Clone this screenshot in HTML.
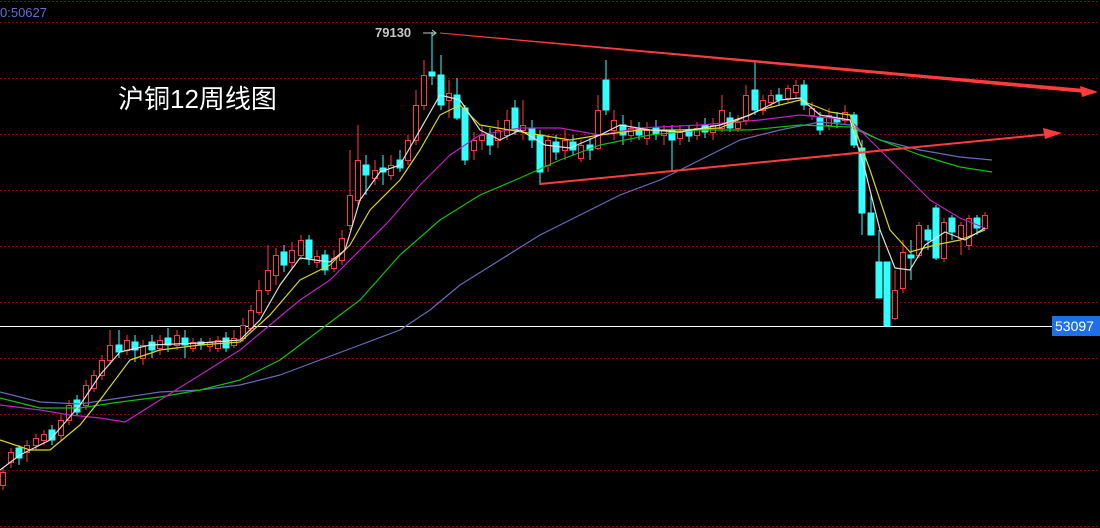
<!DOCTYPE html>
<html><head><meta charset="utf-8"><style>
html,body{margin:0;padding:0;background:#000;width:1100px;height:528px;overflow:hidden}
svg{display:block}
</style></head><body>
<svg width="1100" height="528" viewBox="0 0 1100 528" xmlns="http://www.w3.org/2000/svg">
<rect width="1100" height="528" fill="#000"/>
<g stroke="#7a0a0a" stroke-width="1" stroke-dasharray="2,2">
<line x1="0" y1="1.5" x2="1100" y2="1.5"/>
<line x1="0" y1="22.5" x2="1100" y2="22.5"/>
<line x1="0" y1="78.5" x2="1100" y2="78.5"/>
<line x1="0" y1="134.5" x2="1100" y2="134.5"/>
<line x1="0" y1="190.5" x2="1100" y2="190.5"/>
<line x1="0" y1="246.5" x2="1100" y2="246.5"/>
<line x1="0" y1="302.5" x2="1100" y2="302.5"/>
<line x1="0" y1="358.5" x2="1100" y2="358.5"/>
<line x1="0" y1="414.5" x2="1100" y2="414.5"/>
<line x1="0" y1="470.5" x2="1100" y2="470.5"/>
<line x1="0" y1="526.5" x2="1100" y2="526.5"/>
</g>
<line x1="0" y1="326.5" x2="1052" y2="326.5" stroke="#fff" stroke-width="1"/>

<g stroke="#ff3c3c" stroke-width="1" fill="#000">
<path d="M3 468V490M11 448V468M27 440V462M36 434V450M44 430V445M61 415V440M69 400V425M86 380V410M94 370V392M102 355V380M110 330V365M127 335V355M143 340V365M160 335V355M177 330V350M193 338V352M210 338V352M218 336V352M234 330V348M243 318V342M251 305V332M259 280V315M268 245V295M276 248V285M292 242V268M301 235V260M317 250V268M334 250V272M342 230V265M350 150V230M358 125V205M375 160V185M391 155V180M408 135V165M416 90V145M424 60V110M449 80V118M474 132V160M482 125V150M498 120V148M507 110V140M523 100V140M548 135V172M565 130V160M581 140V162M598 95V150M614 110V140M631 120V142M647 122V145M664 125V145M680 125V145M697 122V140M713 118V140M722 95V132M738 115V132M746 85V125M763 95V115M771 90V108M788 85V102M796 80V98M812 102V120M829 108V130M845 105V125M895 270V320M903 240V293M919 222V258M944 218V262M961 222V255M969 215V250M985 212V230"/>
<rect x="0.5" y="472.5" width="5" height="13"/><rect x="8.5" y="452.5" width="5" height="10"/><rect x="24.5" y="445.5" width="5" height="7"/><rect x="33.5" y="438.5" width="5" height="7"/><rect x="41.5" y="434.5" width="5" height="6"/><rect x="58.5" y="420.5" width="5" height="15"/><rect x="66.5" y="405.5" width="5" height="15"/><rect x="83.5" y="385.5" width="5" height="20"/><rect x="91.5" y="375.5" width="5" height="13"/><rect x="99.5" y="360.5" width="5" height="15"/><rect x="107.5" y="345.5" width="5" height="15"/><rect x="124.5" y="340.5" width="5" height="10"/><rect x="140.5" y="345.5" width="5" height="13"/><rect x="157.5" y="340.5" width="5" height="8"/><rect x="174.5" y="335.5" width="5" height="10"/><rect x="190.5" y="342.5" width="5" height="6"/><rect x="207.5" y="342.5" width="5" height="4"/><rect x="215.5" y="340.5" width="5" height="8"/><rect x="231.5" y="338.5" width="5" height="7"/><rect x="240.5" y="325.5" width="5" height="13"/><rect x="248.5" y="310.5" width="5" height="18"/><rect x="256.5" y="290.5" width="5" height="22"/><rect x="265.5" y="270.5" width="5" height="20"/><rect x="273.5" y="255.5" width="5" height="20"/><rect x="289.5" y="250.5" width="5" height="12"/><rect x="298.5" y="240.5" width="5" height="15"/><rect x="314.5" y="256.5" width="5" height="6"/><rect x="331.5" y="258.5" width="5" height="10"/><rect x="339.5" y="238.5" width="5" height="22"/><rect x="347.5" y="195.5" width="5" height="30"/><rect x="355.5" y="160.5" width="5" height="40"/><rect x="372.5" y="170.5" width="5" height="8"/><rect x="388.5" y="165.5" width="5" height="10"/><rect x="405.5" y="140.5" width="5" height="20"/><rect x="413.5" y="105.5" width="5" height="35"/><rect x="421.5" y="75.5" width="5" height="30"/><rect x="446.5" y="93.5" width="5" height="7"/><rect x="471.5" y="140.5" width="5" height="10"/><rect x="479.5" y="135.5" width="5" height="5"/><rect x="495.5" y="130.5" width="5" height="10"/><rect x="504.5" y="120.5" width="5" height="15"/><rect x="520.5" y="125.5" width="5" height="5"/><rect x="545.5" y="140.5" width="5" height="25"/><rect x="562.5" y="140.5" width="5" height="10"/><rect x="578.5" y="145.5" width="5" height="13"/><rect x="595.5" y="110.5" width="5" height="38"/><rect x="611.5" y="120.5" width="5" height="10"/><rect x="628.5" y="128.5" width="5" height="7"/><rect x="644.5" y="130.5" width="5" height="8"/><rect x="661.5" y="130.5" width="5" height="5"/><rect x="677.5" y="132.5" width="5" height="6"/><rect x="694.5" y="128.5" width="5" height="7"/><rect x="710.5" y="125.5" width="5" height="7"/><rect x="719.5" y="110.5" width="5" height="18"/><rect x="735.5" y="122.5" width="5" height="6"/><rect x="743.5" y="95.5" width="5" height="25"/><rect x="760.5" y="100.5" width="5" height="10"/><rect x="768.5" y="95.5" width="5" height="7"/><rect x="785.5" y="88.5" width="5" height="10"/><rect x="793.5" y="85.5" width="5" height="7"/><rect x="809.5" y="108.5" width="5" height="7"/><rect x="826.5" y="115.5" width="5" height="10"/><rect x="842.5" y="112.5" width="5" height="8"/><rect x="892.5" y="290.5" width="5" height="28"/><rect x="900.5" y="252.5" width="5" height="36"/><rect x="916.5" y="225.5" width="5" height="30"/><rect x="941.5" y="222.5" width="5" height="36"/><rect x="958.5" y="225.5" width="5" height="13"/><rect x="966.5" y="218.5" width="5" height="27"/><rect x="982.5" y="215.5" width="5" height="13"/>
</g>
<g stroke="#3ff" stroke-width="1" fill="#3ff">
<path d="M19 445V465M52 425V445M77 395V415M119 330V358M135 335V362M152 335V358M168 328V352M185 330V358M201 338V350M226 332V352M284 245V272M309 235V265M325 250V275M366 155V195M383 155V185M400 150V172M432 32V85M441 55V110M457 78V120M465 105V165M490 128V155M515 100V135M532 120V148M540 130V185M556 135V160M573 135V155M590 138V160M606 60V115M623 115V145M639 122V140M656 120V140M672 125V170M689 125V142M705 118V138M730 112V132M755 62V115M779 88V105M804 80V110M820 112V135M837 112V128M854 112V148M862 140V235M871 195V235M879 230V298M887 262V326M911 240V280M928 225V250M936 205V260M952 215V240M977 215V235"/>
<rect x="16" y="448" width="6" height="10"/><rect x="49" y="430" width="6" height="10"/><rect x="74" y="400" width="6" height="12"/><rect x="116" y="345" width="6" height="7"/><rect x="132" y="342" width="6" height="8"/><rect x="149" y="342" width="6" height="8"/><rect x="165" y="338" width="6" height="7"/><rect x="182" y="338" width="6" height="7"/><rect x="198" y="342" width="6" height="3"/><rect x="223" y="338" width="6" height="10"/><rect x="281" y="252" width="6" height="13"/><rect x="306" y="240" width="6" height="18"/><rect x="322" y="255" width="6" height="15"/><rect x="363" y="165" width="6" height="10"/><rect x="380" y="168" width="6" height="4"/><rect x="397" y="160" width="6" height="8"/><rect x="429" y="72" width="6" height="4"/><rect x="438" y="75" width="6" height="30"/><rect x="454" y="95" width="6" height="23"/><rect x="462" y="108" width="6" height="52"/><rect x="487" y="135" width="6" height="10"/><rect x="512" y="108" width="6" height="22"/><rect x="529" y="128" width="6" height="12"/><rect x="537" y="135" width="6" height="37"/><rect x="553" y="142" width="6" height="10"/><rect x="570" y="142" width="6" height="8"/><rect x="587" y="145" width="6" height="5"/><rect x="603" y="80" width="6" height="30"/><rect x="620" y="125" width="6" height="10"/><rect x="636" y="128" width="6" height="7"/><rect x="653" y="128" width="6" height="6"/><rect x="669" y="130" width="6" height="10"/><rect x="686" y="130" width="6" height="6"/><rect x="702" y="125" width="6" height="7"/><rect x="727" y="118" width="6" height="10"/><rect x="752" y="90" width="6" height="20"/><rect x="776" y="95" width="6" height="5"/><rect x="801" y="85" width="6" height="20"/><rect x="817" y="118" width="6" height="12"/><rect x="834" y="118" width="6" height="4"/><rect x="851" y="115" width="6" height="30"/><rect x="859" y="148" width="6" height="65"/><rect x="868" y="213" width="6" height="22"/><rect x="876" y="262" width="6" height="36"/><rect x="884" y="262" width="6" height="64"/><rect x="908" y="255" width="6" height="3"/><rect x="925" y="230" width="6" height="10"/><rect x="933" y="208" width="6" height="50"/><rect x="949" y="218" width="6" height="14"/><rect x="974" y="218" width="6" height="10"/>
</g>

<g fill="none" stroke-width="1.2" stroke-linejoin="round">
<polyline stroke="#6a6ab8" points="0,392 40,402 80,404 120,398 160,392 200,390 240,385 280,375 320,360 360,345 400,330 430,310 460,285 500,260 540,235 580,215 620,195 660,180 700,160 740,140 780,130 820,122 850,125 880,140 920,150 960,157 992,160"/>
<polyline stroke="#10c010" points="0,398 40,408 80,408 120,402 160,397 200,390 240,380 280,360 320,330 360,300 400,255 440,220 480,195 520,178 560,160 600,145 650,135 700,130 750,130 800,125 850,127 880,140 920,155 960,167 992,172"/>
<polyline stroke="#c020c0" points="0,405 40,410 70,415 100,418 125,422 160,400 200,375 240,350 270,325 300,300 330,280 360,250 390,220 420,185 450,155 480,135 520,128 560,128 600,135 640,128 700,125 760,120 800,115 850,120 880,150 910,180 930,200 960,218 985,228"/>
<polyline stroke="#d8d820" points="0,440 30,450 50,450 80,425 100,400 130,360 160,350 200,345 240,342 270,315 300,280 330,265 350,245 370,210 400,180 420,150 440,115 460,105 480,125 510,130 540,135 570,140 600,135 640,130 680,130 720,128 760,110 800,100 830,112 850,115 870,170 890,230 910,252 935,245 960,240 985,230"/>
<polyline stroke="#e0e0e0" points="0,470 20,455 50,440 80,405 100,375 120,352 150,345 200,343 240,340 260,320 280,285 300,258 330,262 345,250 360,200 380,172 400,165 420,130 440,95 460,100 480,130 500,140 520,130 545,145 570,148 600,135 620,125 650,130 680,132 720,125 750,115 780,100 800,98 820,115 850,120 865,170 880,230 895,268 910,270 925,245 945,232 965,240 985,228"/>
</g>

<g stroke="#ff3c3c" fill="#ff3c3c">
<polygon points="440,32.5 1085,89 1085,93 440,33.5" stroke="none"/>
<polygon points="1098,92 1080,86 1082,97" stroke="none"/>
<line x1="540" y1="184" x2="1050" y2="134" stroke-width="2"/>
<polygon points="1062,133 1043,128 1045,139" stroke="none"/>
</g>

<text x="375" y="37" font-family="Liberation Sans, sans-serif" font-size="13" font-weight="bold" fill="#c8c8c8">79130</text>
<line x1="423" y1="33" x2="435" y2="33" stroke="#c8c8c8"/>
<path d="M432 30L436 33L432 36" stroke="#c8c8c8" fill="none"/>
<text x="0" y="17" font-family="Liberation Sans, sans-serif" font-size="13" fill="#6a6ad0">0:50627</text>
<text x="118" y="108" font-family="Liberation Sans, 'Noto Sans CJK SC', sans-serif" font-size="26" fill="#fff">沪铜12周线图</text>

<rect x="1052" y="316" width="48" height="20" fill="#1e6fe8"/>
<text x="1055" y="331" font-family="Liberation Sans, sans-serif" font-size="14" fill="#fff">53097</text>
</svg>
</body></html>
